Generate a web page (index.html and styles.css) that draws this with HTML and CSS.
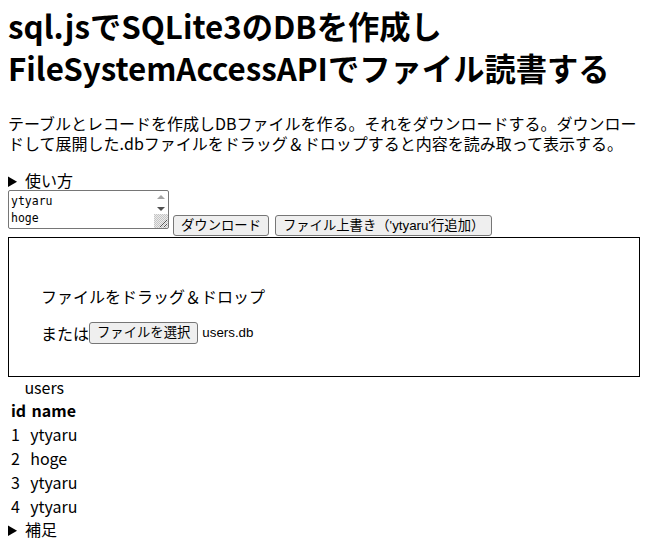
FILE: index.html
```html
<!DOCTYPE html>
<html lang="ja">
<head>
<meta charset="utf-8">
<title>sql.jsでSQLite3のDBを作成しFileSystemAccessAPIでファイル読書する</title>
<link rel="stylesheet" href="styles.css">
</head>
<body>
<h1 class="title">sql.jsでSQLite3のDBを作成しFileSystemAccessAPIでファイル読書する</h1>
<p class="lead">テーブルとレコードを作成しDBファイルを作る。それをダウンロードする。ダウンロードして展開した.dbファイルをドラッグ＆ドロップすると内容を読み取って表示する。</p>
<details class="fold"><summary>使い方</summary><p>名前を入力してダウンロードする。</p></details>
<div class="controls">
<div class="names-box">
<textarea class="names">ytyaru
hoge
ytyaru
ytyaru</textarea>
<div class="vscroll">
<span class="arr arr-up"></span>
<span class="arr arr-down"></span>
<svg class="grip" width="14" height="14" viewBox="0 0 14 14" aria-hidden="true">
<defs>
<pattern id="chk" width="2" height="2" patternUnits="userSpaceOnUse">
<rect width="1" height="1" fill="#c4c4c4"/>
<rect x="1" y="1" width="1" height="1" fill="#c4c4c4"/>
</pattern>
</defs>
<rect width="14" height="14" fill="#ececec"/>
<rect width="14" height="14" fill="url(#chk)"/>
<path d="M13 6 L6 13 M13 10 L10 13" stroke="#555" stroke-width="1" fill="none"/>
</svg>
</div>
</div>
<button class="btn btn-download">ダウンロード</button>
<button class="btn btn-overwrite">ファイル上書き（'ytyaru'行追加）</button>
</div>
<div class="drop">
<p class="drop-msg">ファイルをドラッグ＆ドロップ</p>
<div class="pick">または<span class="btn file-btn">ファイルを選択</span><span class="file-name">users.db</span></div>
</div>
<table class="users">
<caption>users</caption>
<tr><th>id</th><th>name</th></tr>
<tr><td>1</td><td>ytyaru</td></tr>
<tr><td>2</td><td>hoge</td></tr>
<tr><td>3</td><td>ytyaru</td></tr>
<tr><td>4</td><td>ytyaru</td></tr>
</table>
<details class="fold"><summary>補足</summary><p>sql.jsとFileSystemAccessAPIを使う。</p></details>
</body>
</html>
```
FILE: styles.css
```css
html, body {
  background: #fff;
}
body {
  margin: 8px;
  font-family: "Noto Sans CJK JP", sans-serif;
  font-size: 16px;
  line-height: 1.25;
  color: #000;
}
.title {
  font-size: 31.3px;
  line-height: 42px;
  font-weight: bold;
  margin: -3px 0 24px;
}
.lead {
  margin: 16px 0 17px;
}
.fold summary {
  cursor: pointer;
}
.controls {
  display: flex;
  align-items: flex-end;
}
.names-box {
  box-sizing: border-box;
  display: flex;
  width: 161px;
  height: 39px;
  margin: 0 4px 8px 0;
  border: 1px solid #767676;
  border-radius: 2px;
  background: #fff;
}
.names {
  flex: 1;
  min-width: 0;
  margin: 0;
  border: none;
  outline: none;
  resize: none;
  overflow: hidden;
  padding: 2px 2px;
  font-family: "DejaVu Sans Mono", monospace;
  font-size: 11.5px;
  line-height: 17px;
  color: #000;
  background: transparent;
}
.vscroll {
  width: 15px;
  display: flex;
  flex-direction: column;
  align-items: center;
  padding-top: 4px;
}
.arr {
  width: 0;
  height: 0;
  border-left: 4px solid transparent;
  border-right: 4px solid transparent;
}
.arr-up {
  border-bottom: 4px solid #a3a3a3;
}
.arr-down {
  margin-top: 8px;
  border-top: 4px solid #505050;
}
.grip {
  display: block;
  margin-top: auto;
  margin-left: auto;
}
.btn {
  display: inline-block;
  font-family: "Liberation Sans", "Noto Sans CJK JP", sans-serif;
  font-size: 13.33px;
  line-height: 17px;
  padding: 1px 7px;
  border: 1px solid #767676;
  border-radius: 3px;
  background: #efefef;
  color: #000;
}
.btn-download,
.btn-overwrite {
  margin-bottom: 1px;
}
.btn-overwrite {
  margin-left: 6px;
}
.drop {
  border: 1px solid #000;
  padding: 32px 0;
}
.drop-msg {
  margin: 16px 0 16px 32px;
}
.pick {
  display: flex;
  align-items: center;
  margin-left: 32px;
  height: 22px;
}
.file-btn {
  line-height: 18px;
  padding: 1px 7px;
}
.file-name {
  margin-left: 4px;
  font-family: "Liberation Sans", sans-serif;
  font-size: 13.33px;
}
.users {
  border-spacing: 2px;
}
.users caption {
  line-height: 20px;
}
.users th,
.users td {
  padding: 1px;
  line-height: 20px;
}
.users td {
  text-align: left;
}
```
